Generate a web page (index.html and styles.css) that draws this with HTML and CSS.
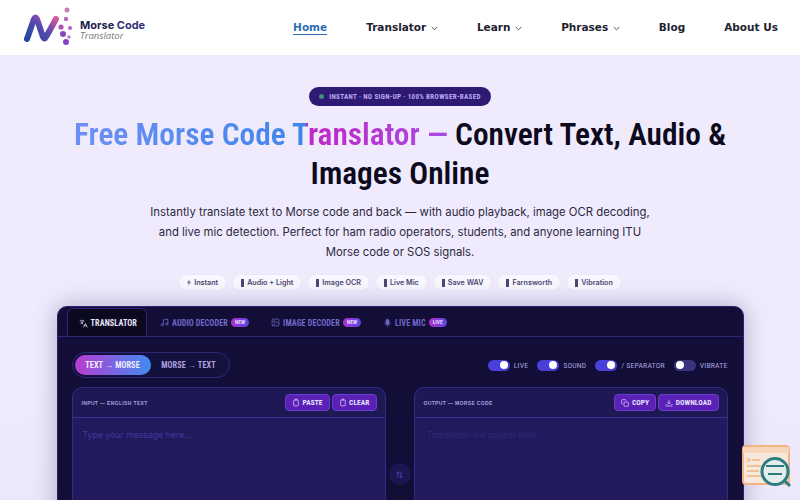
FILE: index.html
```html
<!DOCTYPE html>
<html lang="en">
<head>
    <meta charset="UTF-8">
    <meta name="viewport" content="width=device-width, initial-scale=1.0">
    <title>Free Morse Code Translator</title>
    <link rel="stylesheet" href="styles.css">
</head>
<body>
    <header class="site-header">
        <a class="logo" href="#">
            <svg class="logo-mark" width="50" height="42" viewBox="0 0 50 42">
                <defs>
                    <linearGradient id="logoGrad" x1="0" y1="1" x2="1" y2="0">
                        <stop offset="0" stop-color="#23479f"/>
                        <stop offset="0.55" stop-color="#5a4ab0"/>
                        <stop offset="1" stop-color="#e0559c"/>
                    </linearGradient>
                </defs>
                <path d="M4 33 L11 13 Q12.500 10 14 13 L20 31 Q21.500 34 23 31 L33 13" fill="none" stroke="url(#logoGrad)" stroke-width="6" stroke-linecap="round" stroke-linejoin="round"/>
                <circle cx="44" cy="4" r="2.500" fill="#c77fb0"/>
                <circle cx="43" cy="13" r="2.200" fill="#b86fb8"/>
                <circle cx="47" cy="22" r="2" fill="#b25fc0"/>
                <circle cx="38" cy="21" r="2.600" fill="#b04fb8"/>
                <circle cx="40" cy="28" r="3" fill="#8a45c0"/>
                <circle cx="46" cy="31" r="1.800" fill="#b080d8"/>
                <circle cx="43" cy="36" r="3" fill="#8a3fc8"/>
            </svg>
            <span class="logo-text">
                <span class="logo-name">Morse <em>Code</em></span>
                <span class="logo-sub">Translator</span>
            </span>
        </a>
        <nav class="main-nav">
            <a class="active" href="#">Home</a>
            <a href="#">Translator <svg class="chev" width="7" height="5" viewBox="0 0 7 5"><path d="M.7 1 3.500 3.800 6.300 1"/></svg></a>
            <a href="#">Learn <svg class="chev" width="7" height="5" viewBox="0 0 7 5"><path d="M.7 1 3.500 3.800 6.300 1"/></svg></a>
            <a href="#">Phrases <svg class="chev" width="7" height="5" viewBox="0 0 7 5"><path d="M.7 1 3.500 3.800 6.300 1"/></svg></a>
            <a href="#">Blog</a>
            <a href="#">About Us</a>
        </nav>
    </header>

    <main class="hero">
        <div class="hero-badge"><span class="dot"></span>INSTANT · NO SIGN-UP · 100% BROWSER-BASED</div>
        <h1><span class="grad">Free Morse Code Translator —</span> Convert Text, Audio &amp; Images Online</h1>
        <p class="lead">Instantly translate text to Morse code and back — with audio playback, image OCR decoding, and live mic detection. Perfect for ham radio operators, students, and anyone learning ITU Morse code or SOS signals.</p>

        <div class="chips">
            <span class="chip"><svg class="bolt" width="4" height="7" viewBox="0 0 4 7"><path d="M2.500 0 0 4h1.600L1.200 7 4 2.800H2.300z"/></svg>Instant</span>
            <span class="chip"><i class="bar"></i>Audio + Light</span>
            <span class="chip"><i class="bar"></i>Image OCR</span>
            <span class="chip"><i class="bar"></i>Live Mic</span>
            <span class="chip"><i class="bar"></i>Save WAV</span>
            <span class="chip"><i class="bar"></i>Farnsworth</span>
            <span class="chip"><i class="bar"></i>Vibration</span>
        </div>

        <section class="panel">
            <div class="tabs">
                <div class="tab active">
                    <svg width="9" height="9" viewBox="0 0 24 24"><path d="M5 8l6 6M4 14l6-6 2-3M2 5h12M7 2h1M22 22l-5-10-5 10M14 18h6"/></svg>
                    TRANSLATOR
                </div>
                <div class="tab">
                    <svg width="9" height="9" viewBox="0 0 24 24"><path d="M9 18V5l12-2v13"/><circle cx="6" cy="18" r="3"/><circle cx="18" cy="16" r="3"/></svg>
                    AUDIO DECODER <span class="tag">NEW</span>
                </div>
                <div class="tab">
                    <svg width="9" height="9" viewBox="0 0 24 24"><rect x="3" y="3" width="18" height="18" rx="2"/><circle cx="9" cy="9" r="2"/><path d="M21 15l-5-5L5 21"/></svg>
                    IMAGE DECODER <span class="tag">NEW</span>
                </div>
                <div class="tab">
                    <svg width="9" height="10" viewBox="0 0 24 24"><rect x="8" y="2" width="8" height="13" rx="4" fill="currentColor"/><path d="M5 11a7 7 0 0 0 14 0M12 18v4"/></svg>
                    LIVE MIC <span class="tag">LIVE</span>
                </div>
            </div>

            <div class="panel-body">
                <div class="controls">
                    <div class="mode-switch">
                        <span class="mode active">TEXT → MORSE</span>
                        <span class="mode">MORSE → TEXT</span>
                    </div>
                    <div class="toggles">
                        <label class="toggle"><span class="track on"></span>LIVE</label>
                        <label class="toggle"><span class="track on"></span>SOUND</label>
                        <label class="toggle"><span class="track on"></span>/ SEPARATOR</label>
                        <label class="toggle"><span class="track"></span>VIBRATE</label>
                    </div>
                </div>

                <div class="editors">
                    <div class="editor">
                        <div class="editor-head">
                            <span class="editor-label">INPUT — ENGLISH TEXT</span>
                            <div class="editor-btns">
                                <button class="btn"><svg width="8" height="9" viewBox="0 0 24 24"><rect x="5" y="5" width="14" height="17" rx="2"/><path d="M9 5V2h6v3"/></svg>PASTE</button>
                                <button class="btn"><svg width="8" height="9" viewBox="0 0 24 24"><rect x="5" y="5" width="14" height="17" rx="2"/><path d="M9 5V2h6v3"/></svg>CLEAR</button>
                            </div>
                        </div>
                        <div class="editor-area">Type your message here...</div>
                    </div>

                    <div class="swap">
                        <svg width="9" height="9" viewBox="0 0 24 24"><path d="M8 20V5M3 10l5-5 5 5M16 5v15M12 16l4 4 4-4"/></svg>
                    </div>

                    <div class="editor">
                        <div class="editor-head">
                            <span class="editor-label">OUTPUT — MORSE CODE</span>
                            <div class="editor-btns">
                                <button class="btn"><svg width="8" height="8" viewBox="0 0 24 24"><rect x="9" y="9" width="13" height="13" rx="2"/><path d="M5 15H4a2 2 0 0 1-2-2V4a2 2 0 0 1 2-2h9a2 2 0 0 1 2 2v1"/></svg>COPY</button>
                                <button class="btn"><svg width="8" height="8" viewBox="0 0 24 24"><path d="M21 15v4a2 2 0 0 1-2 2H5a2 2 0 0 1-2-2v-4M7 10l5 5 5-5M12 15V3"/></svg>DOWNLOAD</button>
                            </div>
                        </div>
                        <div class="editor-area dim">Translation will appear here...</div>
                    </div>
                </div>
            </div>
        </section>
    </main>

    <svg class="float-widget" width="50" height="44" viewBox="0 0 50 44">
        <rect x="2" y="2" width="46" height="38" rx="3" fill="#f8e8dc" stroke="#f0b486" stroke-width="2"/>
        <path d="M2 3h46v6H2z" fill="#f6d4b8"/>
        <path d="M6 14l3 2-3 2M11 16h8M6 22h14M6 27h12M6 32h16" fill="none" stroke="#f0b486" stroke-width="1.500"/>
        <circle cx="34" cy="27.500" r="13" fill="#e4ecec" stroke="#2c7d80" stroke-width="3"/>
        <path d="M25 22h18M27 30h14" stroke="#2c7d80" stroke-width="2"/>
        <path d="M44 37l5 5" stroke="#2c7d80" stroke-width="3"/>
    </svg>
</body>
</html>
```
FILE: styles.css
```css
* {
    box-sizing: border-box;
}
html, body {
    height: 500px;
    overflow: hidden;
}
body {
    margin: 0;
    font-family: Inter, "Noto Sans", sans-serif;
    background: #f0ebfc;
    color: #0d0a1e;
}
.site-header {
    height: 55px;
    background: #fff;
    display: flex;
    align-items: center;
    justify-content: space-between;
    padding: 0 22px 0 23px;
}
.logo {
    display: flex;
    align-items: center;
    gap: 7px;
    text-decoration: none;
    margin-top: -1px;
}
.logo-text {
    display: flex;
    flex-direction: column;
    margin-top: 6px;
}
.logo-name {
    font-family: Inter, sans-serif;
    font-weight: 700;
    font-size: 11px;
    line-height: 12px;
    color: #1b2350;
}
.logo-name em {
    font-style: normal;
    color: #33307a;
}
.logo-sub {
    font-family: "Open Sans", sans-serif;
    font-style: italic;
    font-size: 9.500px;
    line-height: 10px;
    color: #777;
}
.main-nav {
    display: flex;
    gap: 39px;
}
.main-nav a {
    font-family: "DejaVu Sans", sans-serif;
    font-weight: 700;
    font-size: 10.500px;
    color: #1f2230;
    text-decoration: none;
    padding-bottom: 1px;
    border-bottom: 1px solid transparent;
    white-space: nowrap;
}
.main-nav a.active {
    color: #2f6fb0;
    border-bottom-color: #2f6fb0;
}
.chev {
    fill: none;
    stroke: #555;
    stroke-width: 1;
    margin-left: 1px;
}

.hero {
    display: flex;
    flex-direction: column;
    align-items: center;
    padding-top: 32px;
    background: linear-gradient(#f0ebfc 60%, #e9e5f6);
}
.hero-badge {
    height: 19px;
    width: 182px;
    display: flex;
    align-items: center;
    justify-content: center;
    gap: 5px;
    border-radius: 10px;
    background: #2e1a72;
    color: #bda8f5;
    font-family: Roboto, sans-serif;
    font-stretch: 75%;
    font-weight: 700;
    font-size: 7px;
    letter-spacing: .35px;
    white-space: nowrap;
}
.dot {
    width: 5px;
    height: 5px;
    border-radius: 50%;
    background: #3f8f7f;
}
h1 {
    width: 680px;
    margin: 9px 0 0;
    text-align: center;
    font-family: Roboto, sans-serif;
    font-stretch: 75%;
    font-weight: 600;
    font-size: 31.400px;
    line-height: 39px;
    color: #0d0a1e;
}
.grad {
    background: linear-gradient(90deg, #6d8ff5 0%, #3f86ea 62%, #c026c8 62%, #a94be0 100%);
    -webkit-background-clip: text;
    background-clip: text;
    color: transparent;
}
.lead {
    width: 510px;
    margin: 9px 0 0;
    text-align: center;
    font-size: 11.350px;
    line-height: 20px;
    color: #2b2840;
}
.chips {
    display: flex;
    gap: 5px;
    margin-top: 12px;
}
.chip {
    height: 17px;
    display: flex;
    align-items: center;
    gap: 3px;
    padding: 0 8px;
    background: #f8f6fe;
    border: 1px solid #ebe6f8;
    border-radius: 9px;
    font-size: 7.200px;
    font-weight: 600;
    color: #4d4872;
    white-space: nowrap;
}
.bar {
    width: 3px;
    height: 8px;
    background: #4d4872;
}
.bolt {
    fill: #7a7698;
}

.panel {
    width: 687px;
    height: 300px;
    margin-top: 15px;
    flex-shrink: 0;
    background: #120e38;
    border: 1px solid #2a2170;
    border-radius: 10px 10px 0 0;
    box-shadow: 0 0 24px rgba(30, 20, 90, .3);
}
.tabs {
    height: 30px;
    display: flex;
    align-items: flex-end;
    padding-left: 9px;
    border-bottom: 1px solid #2f2678;
}
.tab {
    height: 28px;
    display: flex;
    align-items: center;
    gap: 3px;
    padding: 1px 11px 0;
    font-family: Roboto, sans-serif;
    font-stretch: 75%;
    font-weight: 700;
    font-size: 8.200px;
    letter-spacing: .1px;
    color: #7267c8;
    white-space: nowrap;
}
.tab svg, .btn svg, .swap svg {
    fill: none;
    stroke: currentColor;
    stroke-width: 2;
}
.tab.active {
    margin-right: 2px;
    padding-right: 9px;
    color: #e8e4fa;
    background: #0b0920;
    border: 1px solid #2f2678;
    border-bottom: 0;
    border-radius: 6px 6px 0 0;
}
.tag {
    padding: 0 4px;
    height: 9px;
    line-height: 9px;
    border-radius: 5px;
    font-size: 5.500px;
    letter-spacing: 0;
    color: #e8d8ff;
    background: linear-gradient(90deg, #b02fd0, #5a48e0);
}
.panel-body {
    padding: 15px 15px 0 14px;
}
.controls {
    display: flex;
    justify-content: space-between;
    align-items: center;
}
.mode-switch {
    width: 158px;
    height: 26px;
    display: flex;
    align-items: center;
    padding: 2px;
    border: 1px solid #2f2678;
    border-radius: 13px;
    background: #15113f;
}
.mode {
    flex: 1;
    height: 20px;
    line-height: 20px;
    text-align: center;
    font-family: Roboto, sans-serif;
    font-stretch: 75%;
    font-weight: 700;
    font-size: 8.200px;
    letter-spacing: .1px;
    color: #a9a0dc;
    white-space: nowrap;
}
.mode.active {
    flex: none;
    width: 76px;
    border-radius: 10px;
    color: #f0eaff;
    background: linear-gradient(90deg, #b83cd0, #3f8cf0);
}
.toggles {
    display: flex;
    gap: 9px;
}
.toggle {
    display: flex;
    align-items: center;
    gap: 4px;
    font-family: Roboto, sans-serif;
    font-stretch: 75%;
    font-size: 7.800px;
    letter-spacing: .15px;
    color: #a9a0dc;
}
.track {
    position: relative;
    width: 22px;
    height: 11px;
    border-radius: 6px;
    background: #3a3480;
}
.track::after {
    content: "";
    position: absolute;
    top: 1.500px;
    left: 2px;
    width: 8px;
    height: 8px;
    border-radius: 50%;
    background: #fff;
}
.track.on {
    background: #4a3fd8;
}
.track.on::after {
    left: 12px;
}
.editors {
    display: flex;
    gap: 3px;
    margin-top: 9px;
}
.editor {
    flex: 1;
    height: 200px;
    background: #211a5c;
    border: 1px solid #352b86;
    border-radius: 10px 10px 0 0;
}
.editor-head {
    height: 30px;
    display: flex;
    align-items: center;
    justify-content: space-between;
    padding: 0 8px 0 9px;
    background: #1e1854;
    border-bottom: 1px solid #3b3090;
    border-radius: 10px 10px 0 0;
}
.editor-label {
    font-family: "Liberation Sans", sans-serif;
    font-weight: 700;
    font-size: 5px;
    letter-spacing: .35px;
    color: #a9a0dc;
}
.editor-btns {
    display: flex;
    gap: 2px;
}
.btn {
    height: 17px;
    display: flex;
    align-items: center;
    gap: 2.500px;
    padding: 0 6px;
    border: 1px solid #6a3fd0;
    border-radius: 4px;
    background: #5b21b6;
    color: #e8e0ff;
    font-family: Roboto, sans-serif;
    font-stretch: 75%;
    font-weight: 700;
    font-size: 7.400px;
    letter-spacing: .1px;
}
.editor-area {
    padding: 12px 10px;
    font-size: 8.700px;
    color: #43379c;
}
.editor-area.dim {
    padding-left: 12px;
    font-size: 8.300px;
    font-style: italic;
    color: #2f2778;
}
.swap {
    flex: none;
    width: 22px;
    height: 22px;
    align-self: flex-start;
    margin-top: 76px;
    display: flex;
    align-items: center;
    justify-content: center;
    border-radius: 50%;
    background: #1c1650;
    color: #5a4cc0;
}
.float-widget {
    position: fixed;
    right: 9px;
    bottom: 12px;
}
```
